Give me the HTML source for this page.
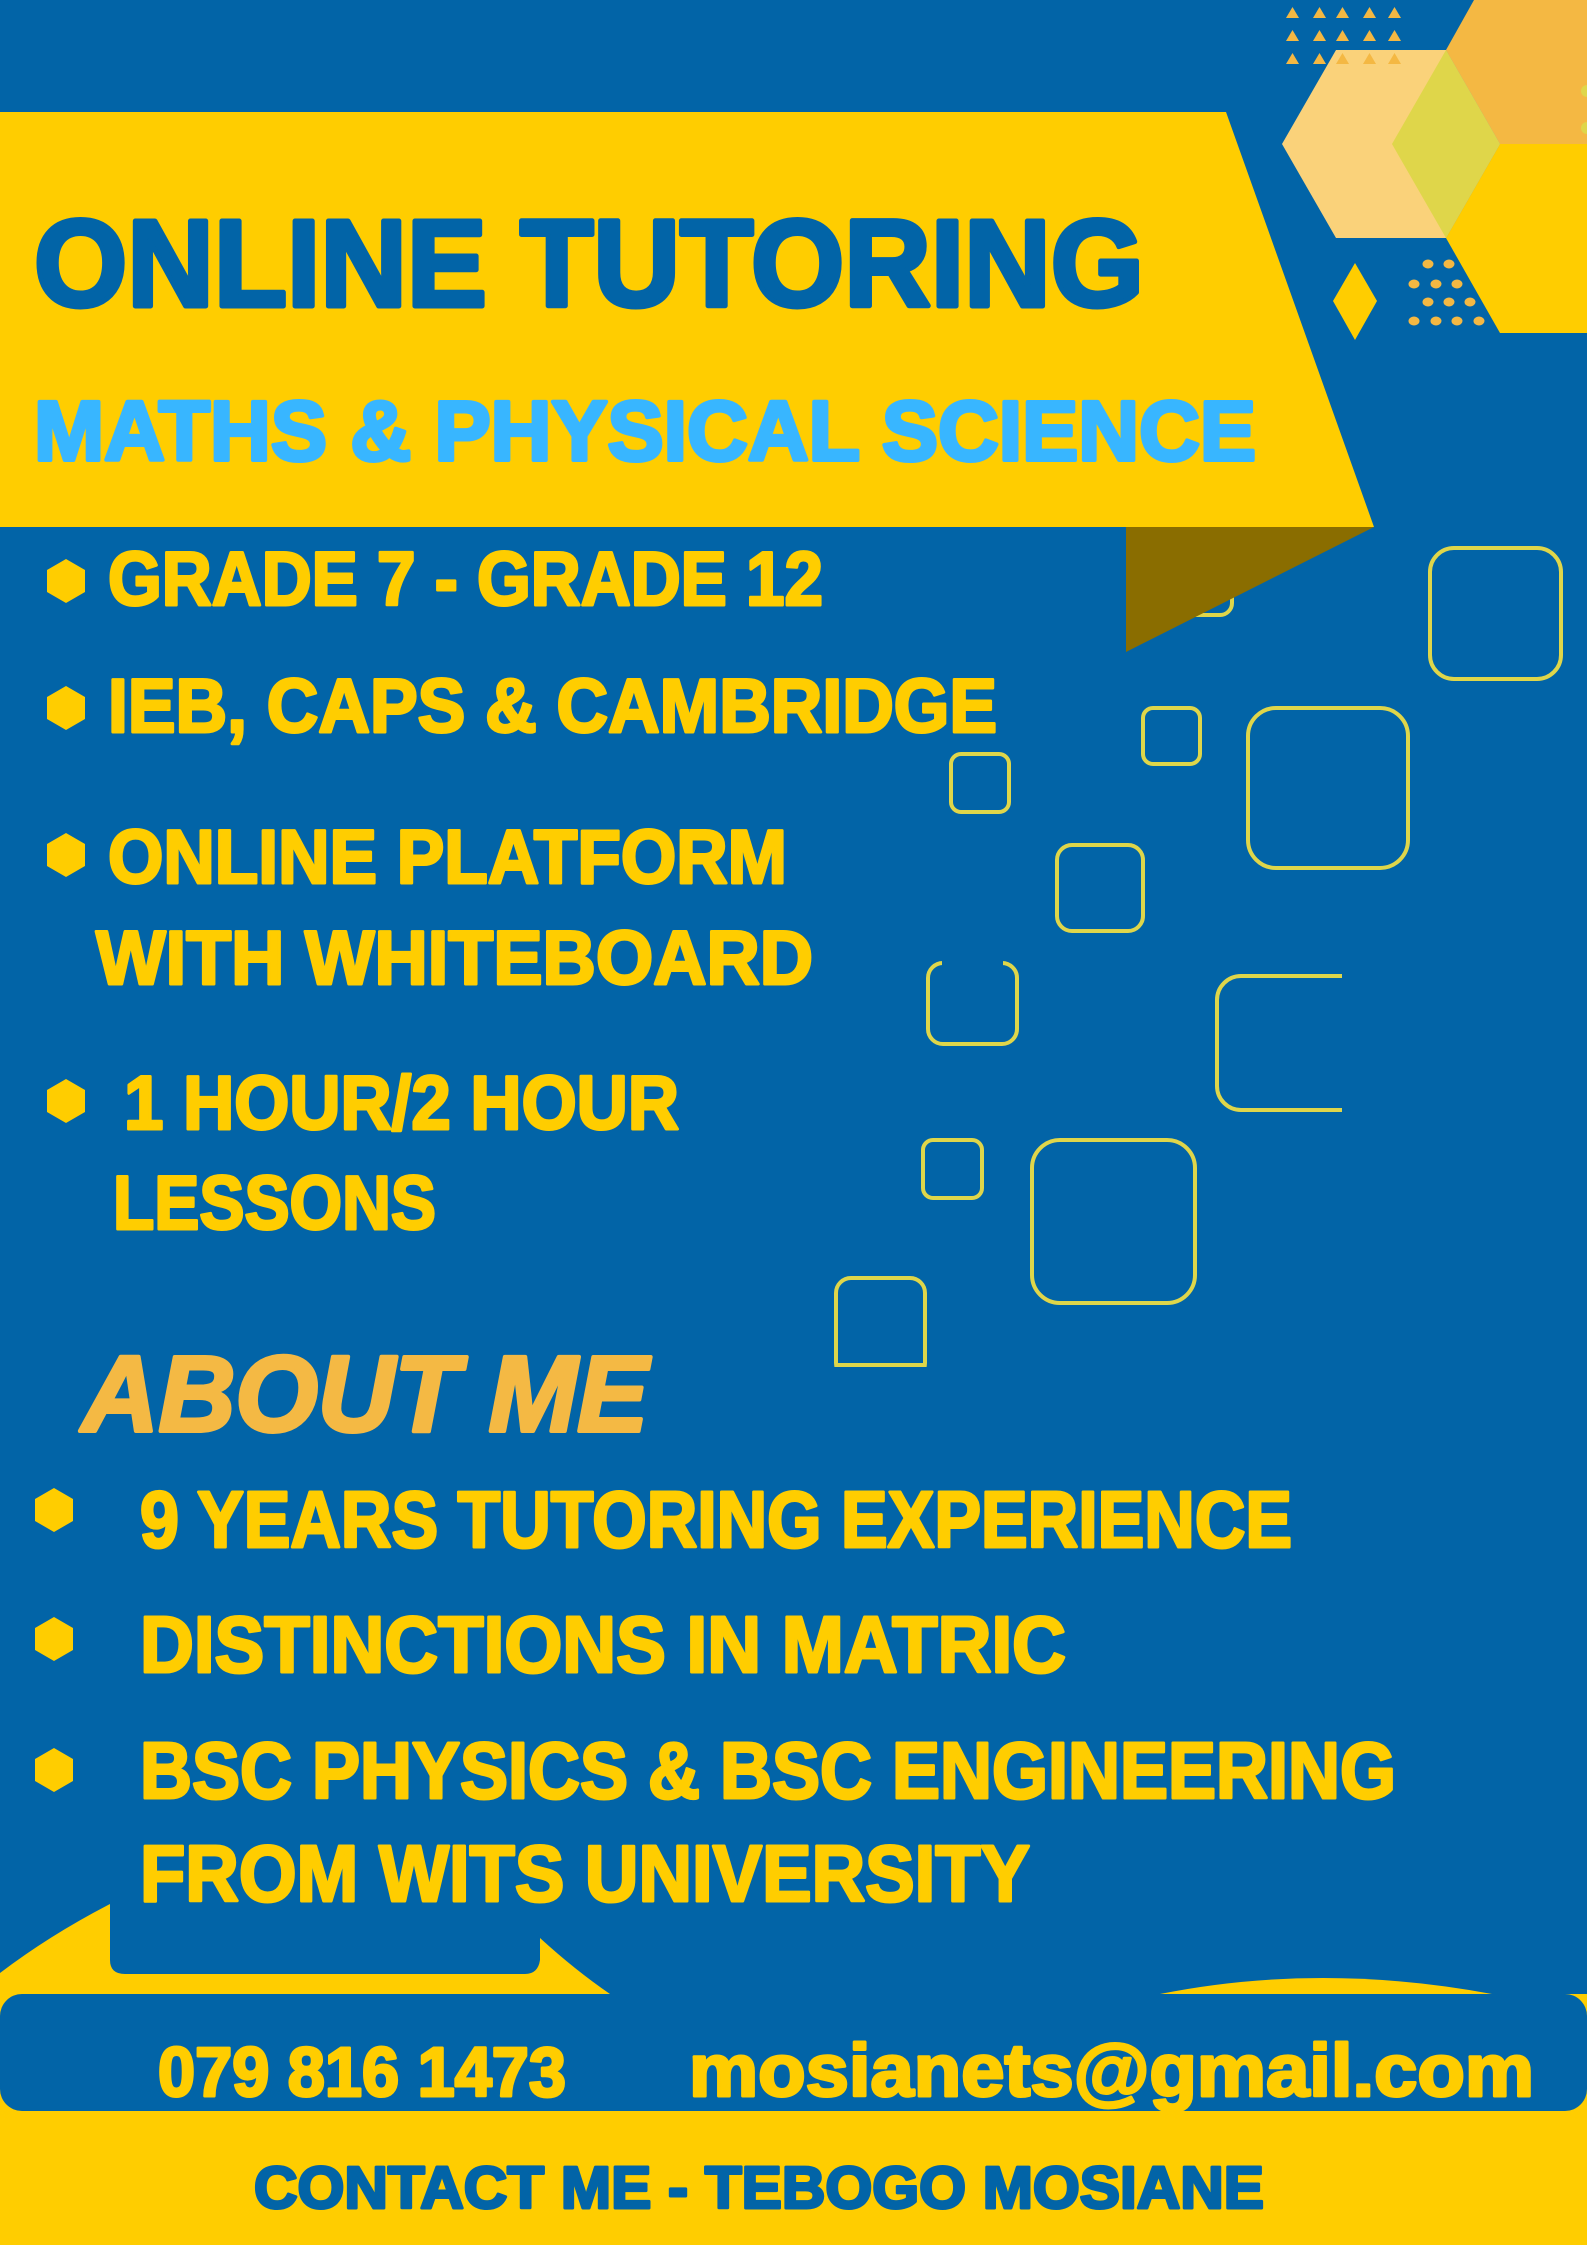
<!DOCTYPE html>
<html><head><meta charset="utf-8"><style>
html,body{margin:0;padding:0;background:#0264a7;}
svg{display:block;}
text{font-family:"Liberation Sans",sans-serif;font-weight:bold;stroke-linejoin:round;}
</style></head><body>
<svg width="1587" height="2245" viewBox="0 0 1587 2245" xmlns="http://www.w3.org/2000/svg">
<rect width="1587" height="2245" fill="#0264a7"/>
<polygon points="1474,0 1587,0 1587,144 1500,144 1446,50" fill="#f4b843"/>
<polygon points="1500,144 1587,144 1587,333 1500,333 1446,238" fill="#ffcd00"/>
<polygon points="1282,144 1336,50 1446,50 1500,144 1446,238 1336,238" fill="#fad27a"/>
<polygon points="1392,144 1446,50 1500,144 1446,238" fill="#dfd64a"/>
<circle cx="1587" cy="91" r="6" fill="#dfd64a"/><circle cx="1587" cy="128" r="6" fill="#dfd64a"/>
<g fill="#f4b843">
<polygon points="1286,18 1299,18 1292.5,7"/><polygon points="1313,18 1326,18 1319.5,7"/><polygon points="1336,18 1349,18 1342.5,7"/><polygon points="1363,18 1376,18 1369.5,7"/><polygon points="1388,18 1401,18 1394.5,7"/>
<polygon points="1286,41 1299,41 1292.5,30"/><polygon points="1313,41 1326,41 1319.5,30"/><polygon points="1336,41 1349,41 1342.5,30"/><polygon points="1363,41 1376,41 1369.5,30"/><polygon points="1388,41 1401,41 1394.5,30"/>
<polygon points="1286,64 1299,64 1292.5,53"/><polygon points="1313,64 1326,64 1319.5,53"/><polygon points="1336,64 1349,64 1342.5,53"/><polygon points="1363,64 1376,64 1369.5,53"/><polygon points="1388,64 1401,64 1394.5,53"/>
<ellipse cx="1428" cy="264" rx="5.5" ry="4.5"/><ellipse cx="1449" cy="264" rx="5.5" ry="4.5"/>
<ellipse cx="1414" cy="284" rx="5.5" ry="4.5"/><ellipse cx="1436" cy="284" rx="5.5" ry="4.5"/><ellipse cx="1457" cy="284" rx="5.5" ry="4.5"/>
<ellipse cx="1428" cy="302" rx="5.5" ry="4.5"/><ellipse cx="1449" cy="302" rx="5.5" ry="4.5"/><ellipse cx="1470" cy="302" rx="5.5" ry="4.5"/>
<ellipse cx="1414" cy="321" rx="5.5" ry="4.5"/><ellipse cx="1436" cy="321" rx="5.5" ry="4.5"/><ellipse cx="1457" cy="321" rx="5.5" ry="4.5"/><ellipse cx="1479" cy="321" rx="5.5" ry="4.5"/>
</g>
<polygon points="1333,301 1355,263 1377,301 1355,340" fill="#ffcd00"/>
<g fill="none" stroke="#dfd64a" stroke-width="4">
<rect x="1430" y="548" width="131" height="131" rx="24"/>
<rect x="1175" y="558" width="57" height="57" rx="12"/>
<rect x="1143" y="708" width="57" height="56" rx="10"/>
<rect x="1248" y="708" width="160" height="160" rx="28"/>
<rect x="951" y="754" width="58" height="58" rx="10"/>
<rect x="1057" y="845" width="86" height="86" rx="15"/>
<rect x="928" y="963" width="89" height="81" rx="15"/>
<rect x="1217" y="976" width="150" height="134" rx="24"/>
<rect x="923" y="1140" width="59" height="58" rx="10"/>
<rect x="1032" y="1140" width="163" height="163" rx="28"/>
<rect x="836" y="1278" width="89" height="100" rx="15"/>
</g>
<rect x="942" y="955" width="61" height="14" fill="#0264a7"/>
<rect x="1342" y="970" width="30" height="145" fill="#0264a7"/>
<rect x="830" y="1367" width="100" height="20" fill="#0264a7"/>
<line x1="836" y1="1365" x2="925" y2="1365" stroke="#dfd64a" stroke-width="4"/>
<polygon points="1126,527 1374,527 1126,652" fill="#8a6d00"/>
<polygon points="0,112 1226,112 1374,527 0,527" fill="#ffcd00"/>
<text x="34" y="306" font-size="123" fill="#0264a7" stroke="#0264a7" stroke-width="5" textLength="1110" lengthAdjust="spacingAndGlyphs">ONLINE TUTORING</text>
<text x="34" y="460" font-size="84" fill="#38b6ff" stroke="#38b6ff" stroke-width="4" textLength="1222" lengthAdjust="spacingAndGlyphs">MATHS &amp; PHYSICAL SCIENCE</text>
<g fill="#ffcd00">
<polygon points="66,559 85,570 85,592 66,603 47,592 47,570"/>
<polygon points="66,686 85,697 85,719 66,730 47,719 47,697"/>
<polygon points="66,833 85,844 85,866 66,877 47,866 47,844"/>
<polygon points="66,1079 85,1090 85,1112 66,1123 47,1112 47,1090"/>
<polygon points="54,1488 73,1499 73,1521 54,1532 35,1521 35,1499"/>
<polygon points="54,1617 73,1628 73,1650 54,1661 35,1650 35,1628"/>
<polygon points="54,1748 73,1759 73,1781 54,1792 35,1781 35,1759"/>
</g>
<g fill="#ffcd00" stroke="#ffcd00" stroke-width="3" font-size="76">
<text x="108" y="605" textLength="715" lengthAdjust="spacingAndGlyphs">GRADE 7 - GRADE 12</text>
<text x="108" y="732" textLength="889" lengthAdjust="spacingAndGlyphs">IEB, CAPS &amp; CAMBRIDGE</text>
<text x="108" y="883" textLength="679" lengthAdjust="spacingAndGlyphs">ONLINE PLATFORM</text>
<text x="96" y="984" textLength="717" lengthAdjust="spacingAndGlyphs">WITH WHITEBOARD</text>
<text x="124" y="1129" textLength="555" lengthAdjust="spacingAndGlyphs">1 HOUR/2 HOUR</text>
<text x="113" y="1229" textLength="323" lengthAdjust="spacingAndGlyphs">LESSONS</text>
</g>
<text x="82" y="1431" font-size="108" font-style="italic" fill="#f4b944" stroke="#f4b944" stroke-width="4" textLength="566" lengthAdjust="spacingAndGlyphs">ABOUT ME</text>
<g fill="#ffcd00" stroke="#ffcd00" stroke-width="3" font-size="80">
<text x="140" y="1547" textLength="1152" lengthAdjust="spacingAndGlyphs">9 YEARS TUTORING EXPERIENCE</text>
<text x="140" y="1672" textLength="926" lengthAdjust="spacingAndGlyphs">DISTINCTIONS IN MATRIC</text>
<text x="140" y="1798" textLength="1256" lengthAdjust="spacingAndGlyphs">BSC PHYSICS &amp; BSC ENGINEERING</text>
<text x="140" y="1901" textLength="890" lengthAdjust="spacingAndGlyphs">FROM WITS UNIVERSITY</text>
</g>
<path d="M0,1973 Q50,1935 110,1904 L110,1960 Q110,1974 125,1974 L525,1974 Q538,1974 540,1960 L540,1938 Q575,1970 610,1994 L0,1994 Z" fill="#ffcd00"/>
<path d="M1160,1994 Q1320,1962 1492,1994 Z" fill="#ffcd00"/>
<rect x="0" y="1994" width="1587" height="251" fill="#ffcd00"/>
<rect x="0" y="1994" width="1587" height="117" rx="22" fill="#0264a7"/>
<text x="158" y="2096" font-size="70" fill="#ffcd00" stroke="#ffcd00" stroke-width="3" textLength="408" lengthAdjust="spacingAndGlyphs">079 816 1473</text>
<text x="689" y="2096" font-size="74" fill="#ffcd00" stroke="#ffcd00" stroke-width="3" textLength="845" lengthAdjust="spacingAndGlyphs">mosianets@gmail.com</text>
<text x="254" y="2208" font-size="59" fill="#0264a7" stroke="#0264a7" stroke-width="3" textLength="1010" lengthAdjust="spacingAndGlyphs">CONTACT  ME - TEBOGO MOSIANE</text>
</svg>
</body></html>
